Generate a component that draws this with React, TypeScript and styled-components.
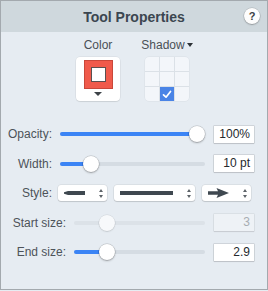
import React from "react";
import styled, { createGlobalStyle } from "styled-components";

const GlobalStyle = createGlobalStyle`
  html, body {
    margin: 0;
    padding: 0;
    background: #e6ecf2;
  }
  body {
    font-family: "Liberation Sans", Arial, Helvetica, sans-serif;
  }
`;

const Panel = styled.div`
  width: 268px;
  height: 290px;
  box-sizing: border-box;
  border: 1px solid #a3a9ae;
  background: #e6ecf2;
  display: flex;
  flex-direction: column;
`;

const Header = styled.div`
  height: 31px;
  flex: none;
  background: #cfd8dd;
  display: flex;
  align-items: center;
  justify-content: center;
  position: relative;
`;

const Title = styled.div`
  font-size: 14px;
  font-weight: bold;
  color: #3b4650;
  line-height: 16px;
`;

const HelpButton = styled.div`
  position: absolute;
  right: 7px;
  top: 7px;
  width: 16px;
  height: 16px;
  border-radius: 50%;
  background: #fdfdfd;
  box-shadow: 0 0 0 0.5px rgba(0, 0, 0, 0.18), 0 1px 1.5px rgba(0, 0, 0, 0.22);
  display: flex;
  align-items: center;
  justify-content: center;
  font-size: 11px;
  font-weight: bold;
  color: #3a3f45;
`;

const TopSection = styled.div`
  display: flex;
  justify-content: center;
  gap: 25px;
  padding: 6px 3px 0 0;
  height: 79px;
  box-sizing: border-box;
  flex: none;
`;

const Column = styled.div`
  display: flex;
  flex-direction: column;
  align-items: center;
  width: 44px;
`;

const ColumnLabel = styled.div`
  font-size: 12px;
  line-height: 14px;
  color: #4a5056;
  white-space: nowrap;
  display: flex;
  align-items: center;
  gap: 2px;
  margin-bottom: 5px;
`;

const SmallTriangle = styled.span<{ $w: number; $h: number; $color: string }>`
  display: inline-block;
  width: 0;
  height: 0;
  border-left: ${(p) => p.$w / 2}px solid transparent;
  border-right: ${(p) => p.$w / 2}px solid transparent;
  border-top: ${(p) => p.$h}px solid ${(p) => p.$color};
`;

const SwatchButton = styled.div`
  width: 44px;
  height: 44px;
  border-radius: 4px;
  background: #ffffff;
  box-shadow: 0 0 0 0.5px rgba(0, 0, 0, 0.08), 0 1px 1px rgba(0, 0, 0, 0.08);
  display: flex;
  flex-direction: column;
  align-items: center;
  padding-top: 3px;
  box-sizing: border-box;
  gap: 3px;
`;

const RedSquare = styled.div`
  width: 29px;
  height: 29px;
  box-sizing: border-box;
  background: #f05a4b;
  border: 1px solid #c9473a;
  display: flex;
  align-items: center;
  justify-content: center;
`;

const InnerWhite = styled.div`
  width: 15px;
  height: 15px;
  box-sizing: border-box;
  background: #ffffff;
  border: 1px solid #5a5050;
`;

const ShadowGrid = styled.div`
  width: 44px;
  height: 44px;
  border-radius: 4px;
  overflow: hidden;
  display: grid;
  grid-template-columns: repeat(3, 1fr);
  grid-template-rows: repeat(3, 1fr);
  gap: 1px;
  background: #dbe1e7;
  box-shadow: 0 0 0 0.5px rgba(0, 0, 0, 0.06);
`;

const ShadowCell = styled.div<{ $checked?: boolean }>`
  background: ${(p) => (p.$checked ? "#4a84e6" : "#f3f6fa")};
  display: flex;
  align-items: center;
  justify-content: center;
`;

const Rows = styled.div`
  display: flex;
  flex-direction: column;
  gap: 12.5px;
  padding: 14.5px 13px 0 0;
`;

const Row = styled.div`
  display: flex;
  align-items: center;
  height: 17px;
`;

const Label = styled.div<{ $width: number; $gap: number }>`
  width: ${(p) => p.$width}px;
  margin-right: ${(p) => p.$gap}px;
  flex: none;
  text-align: right;
  font-size: 12px;
  color: #4d5359;
  white-space: nowrap;
`;

const SliderBox = styled.div`
  flex: 1;
  height: 17px;
  position: relative;
`;

const Rail = styled.div<{ $disabled?: boolean }>`
  position: absolute;
  left: 0;
  right: 0;
  top: 6.5px;
  height: 4px;
  border-radius: 2px;
  background: ${(p) => (p.$disabled ? "#dce2e8" : "#d5dce3")};
  overflow: hidden;
`;

const Fill = styled.div`
  height: 100%;
  background: #3b84f5;
`;

const Thumb = styled.div<{ $disabled?: boolean }>`
  position: absolute;
  top: 0.5px;
  width: 16px;
  height: 16px;
  margin-left: -8px;
  border-radius: 50%;
  background: ${(p) => (p.$disabled ? "#f7f9fb" : "#ffffff")};
  box-shadow: ${(p) =>
    p.$disabled
      ? "0 0 0 0.5px rgba(0,0,0,0.1), 0 1px 1.5px rgba(0,0,0,0.1)"
      : "0 0 0 0.5px rgba(0,0,0,0.2), 0 1px 2px rgba(0,0,0,0.28)"};
`;

const ValueBox = styled.div<{ $disabled?: boolean }>`
  width: 40px;
  height: 17px;
  margin-left: 9px;
  flex: none;
  box-sizing: border-box;
  padding-right: 4px;
  background: ${(p) => (p.$disabled ? "#eef2f6" : "#ffffff")};
  box-shadow: 0 0 0 0.5px rgba(0, 0, 0, ${(p) => (p.$disabled ? 0.1 : 0.2)}),
    0 1px 1px rgba(0, 0, 0, 0.08);
  font-size: 12px;
  line-height: 17px;
  text-align: right;
  color: ${(p) => (p.$disabled ? "#a8adb2" : "#25292d")};
`;

const Popups = styled.div`
  display: flex;
  gap: 7px;
  margin-right: 2px;
`;

const Popup = styled.div<{ $width: number }>`
  width: ${(p) => p.$width}px;
  height: 16px;
  box-sizing: border-box;
  border-radius: 3px;
  background: #ffffff;
  box-shadow: 0 0 0 0.5px rgba(0, 0, 0, 0.1), 0 1px 1px rgba(0, 0, 0, 0.12);
  display: flex;
  align-items: center;
  padding: 0 4px 0 6px;
  gap: 4px;
`;

const PopupContent = styled.div`
  flex: 1;
  display: flex;
  align-items: center;
`;

const Stepper = styled.div`
  display: flex;
  flex-direction: column;
  gap: 3px;
  align-items: center;
`;

const StepUp = styled.span`
  width: 0;
  height: 0;
  border-left: 2.5px solid transparent;
  border-right: 2.5px solid transparent;
  border-bottom: 3.5px solid #5d6369;
`;

const StepDown = styled(StepUp)`
  border-bottom: none;
  border-top: 3.5px solid #5d6369;
`;

function Slider({ frac, disabled }: { frac: number; disabled?: boolean }) {
  const pos = `calc(8px + ${frac} * (100% - 16px))`;
  return (
    <SliderBox>
      <Rail $disabled={disabled}>
        {!disabled && <Fill style={{ width: pos }} />}
      </Rail>
      <Thumb $disabled={disabled} style={{ left: pos }} />
    </SliderBox>
  );
}

function SliderRow(props: {
  label: string;
  labelWidth: number;
  frac: number;
  value: string;
  disabled?: boolean;
}) {
  return (
    <Row>
      <Label $width={props.labelWidth} $gap={8}>
        {props.label}
      </Label>
      <Slider frac={props.frac} disabled={props.disabled} />
      <ValueBox $disabled={props.disabled}>{props.value}</ValueBox>
    </Row>
  );
}

const lineColor = "#3f4850";

export default function App() {
  return (
    <>
      <GlobalStyle />
      <Panel>
        <Header>
          <Title>Tool Properties</Title>
          <HelpButton>?</HelpButton>
        </Header>
        <TopSection>
          <Column>
            <ColumnLabel>Color</ColumnLabel>
            <SwatchButton>
              <RedSquare>
                <InnerWhite />
              </RedSquare>
              <SmallTriangle $w={8} $h={4} $color="#3d4348" />
            </SwatchButton>
          </Column>
          <Column>
            <ColumnLabel>
              Shadow
              <SmallTriangle $w={7} $h={4} $color="#2d3237" />
            </ColumnLabel>
            <ShadowGrid>
              {Array.from({ length: 9 }).map((_, i) => (
                <ShadowCell key={i} $checked={i === 7}>
                  {i === 7 && (
                    <svg width="10" height="9" viewBox="0 0 10 9">
                      <polyline
                        points="1.5,4.8 4,7.2 8.5,1.5"
                        fill="none"
                        stroke="#ffffff"
                        strokeWidth="1.7"
                        strokeLinecap="round"
                        strokeLinejoin="round"
                      />
                    </svg>
                  )}
                </ShadowCell>
              ))}
            </ShadowGrid>
          </Column>
        </TopSection>
        <Rows>
          <SliderRow label="Opacity:" labelWidth={51} frac={1} value="100%" />
          <SliderRow label="Width:" labelWidth={51} frac={0.18} value="10 pt" />
          <Row>
            <Label $width={51} $gap={6}>
              Style:
            </Label>
            <Popups>
              <Popup $width={49}>
                <PopupContent>
                  <svg width="21" height="6" viewBox="0 0 21 6">
                    <path d="M0 2.2 L4 1 L21 1 L21 5 L4 5 L0 3.8 Z" fill={lineColor} />
                  </svg>
                </PopupContent>
                <Stepper>
                  <StepUp />
                  <StepDown />
                </Stepper>
              </Popup>
              <Popup $width={81}>
                <PopupContent>
                  <svg width="53" height="6" viewBox="0 0 53 6">
                    <rect x="0" y="1" width="53" height="4" fill={lineColor} />
                  </svg>
                </PopupContent>
                <Stepper>
                  <StepUp />
                  <StepDown />
                </Stepper>
              </Popup>
              <Popup $width={49}>
                <PopupContent>
                  <svg width="22" height="12" viewBox="0 0 22 12">
                    <path
                      d="M0 4.2 L10 4.2 L8.5 1 L21 6 L8.5 11 L10 7.8 L0 7.8 Z"
                      fill={lineColor}
                    />
                  </svg>
                </PopupContent>
                <Stepper>
                  <StepUp />
                  <StepDown />
                </Stepper>
              </Popup>
            </Popups>
          </Row>
          <SliderRow
            label="Start size:"
            labelWidth={65}
            frac={0.22}
            value="3"
            disabled
          />
          <SliderRow label="End size:" labelWidth={65} frac={0.22} value="2.9" />
        </Rows>
      </Panel>
    </>
  );
}
